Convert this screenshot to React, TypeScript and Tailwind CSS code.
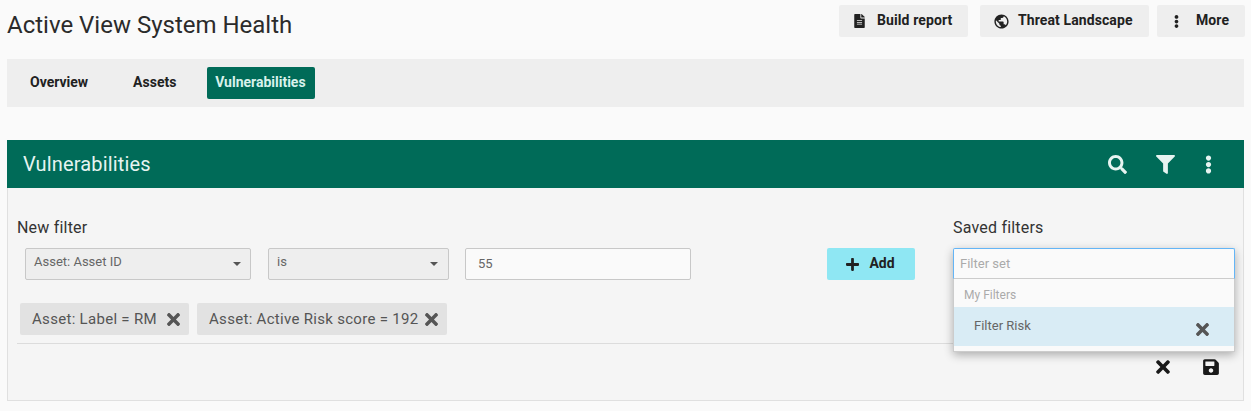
import { FaEllipsisV, FaFileAlt, FaFilter, FaPlus, FaSave, FaSearch, FaTimes } from "react-icons/fa";
import { MdPublic } from "react-icons/md";

const Caret = () => (
  <span className="h-0 w-0 border-x-[4px] border-t-[4px] border-x-transparent border-t-[#555]" />
);

const Chip = ({ label, className }: { label: string; className: string }) => (
  <div className={`flex h-[32px] items-center justify-between rounded-[2px] bg-[#e2e2e2] pl-[12px] pr-[9px] text-[15px] tracking-[0.3px] text-[#555] ${className}`}>
    <span>{label}</span>
    <FaTimes className="h-[19px] w-[13px] text-[#555]" />
  </div>
);

const HeaderButton = ({ icon, label, className }: { icon: React.ReactNode; label: string; className: string }) => (
  <button className={`flex h-[32px] items-center rounded-[2px] bg-[#eeeeee] text-[14px] font-bold tracking-[0.1px] text-[#212121] ${className}`}>
    {icon}
    <span className="mb-[2px]">{label}</span>
  </button>
);

export default function App() {
  return (
    <div className="h-[411px] w-[1251px] overflow-hidden bg-[#fafafa] font-['Roboto',sans-serif] text-[#212121]">
      <div className="flex h-[59px] items-start justify-between pl-[7px] pr-[6px] pt-[5px]">
        <h1 className="mt-[3px] text-[24px] leading-[34px] font-normal text-[#2b2b2b]">Active View System Health</h1>
        <div className="flex">
          <HeaderButton className="w-[129px] pl-[15px] gap-[12px]" icon={<FaFileAlt className="h-[14px] w-[11px]" />} label="Build report" />
          <HeaderButton className="ml-[12px] w-[169px] pl-[13px] gap-[8px]" icon={<MdPublic className="h-[17px] w-[17px]" />} label="Threat Landscape" />
          <HeaderButton className="ml-[8px] w-[88px] pl-[17px] gap-[17px]" icon={<FaEllipsisV className="h-[15px] w-[5px]" />} label="More" />
        </div>
      </div>

      <nav className="mx-[7px] flex h-[48px] items-center bg-[#eeeeee] text-[14px] font-bold">
        <a className="mb-[2px] ml-[23px] text-[#212121]">Overview</a>
        <a className="mb-[2px] ml-[45px] text-[#212121]">Assets</a>
        <a className="ml-[31px] flex h-[32px] w-[108px] items-center justify-center rounded-[2px] bg-[#006b58] pb-[2px] pr-[2px] text-[#d9f2ec]">Vulnerabilities</a>
      </nav>

      <section className="mx-[7px] mt-[33px]">
        <header className="flex h-[48px] items-center justify-between bg-[#006b58] pl-[16px] pr-[32px] text-white">
          <h2 className="text-[20px] tracking-[0.15px] font-normal text-[#e6f4f1]">Vulnerabilities</h2>
          <div className="flex items-center text-[#e6f4f1]">
            <FaSearch className="h-[19px] w-[19px]" />
            <FaFilter className="ml-[29px] h-[19px] w-[19px]" />
            <FaEllipsisV className="ml-[30px] h-[19px] w-[7px]" />
          </div>
        </header>

        <div className="relative h-[213px] border-x border-b border-[#e0e0e0] bg-[#f5f5f5]">
          <div className="flex pl-[9px] pt-[30px]">
            <div className="w-[936px]">
              <div className="text-[16px] leading-[19px] tracking-[0.2px] text-[#333]">New filter</div>
              <div className="mt-[11px] flex items-center pl-[8px]">
                <div className="flex h-[32px] w-[226px] items-start justify-between rounded-[2px] border border-[#c8c8c8] bg-[#eeeeee] pl-[8px] pr-[9px] pt-[3px] text-[13px] text-[#666]">
                  <span>Asset: Asset ID</span>
                  <span className="mt-[10px] flex"><Caret /></span>
                </div>
                <div className="ml-[17px] flex h-[32px] w-[181px] items-start justify-between rounded-[2px] border border-[#c8c8c8] bg-[#eeeeee] pl-[8px] pr-[10px] pt-[3px] text-[13px] text-[#666]">
                  <span>is</span>
                  <span className="mt-[10px] flex"><Caret /></span>
                </div>
                <div className="ml-[16px] flex h-[32px] w-[226px] items-center rounded-[2px] border border-[#c8c8c8] bg-[#fafafa] pl-[12px] text-[13px] text-[#666]">55</div>
                <button className="ml-[136px] flex h-[32px] w-[88px] items-center justify-center gap-[10px] rounded-[2px] bg-[#8fe7f3] pr-[1px] text-[14px] font-bold text-[#212121]">
                  <FaPlus className="h-[15px] w-[13px]" />
                  <span className="mb-[1px]">Add</span>
                </button>
              </div>
            </div>
            <div className="w-[282px]">
              <div className="text-[16px] leading-[19px] tracking-[0.2px] text-[#333]">Saved filters</div>
            </div>
          </div>

          <div className="mt-[23px] flex gap-[8px] pl-[12px]">
            <Chip className="w-[169px]" label="Asset: Label = RM" />
            <Chip className="w-[250px]" label="Asset: Active Risk score = 192" />
          </div>

          <div className="mx-[9px] mt-[8px] border-t border-[#dcdcdc]" />

          <div className="flex items-center justify-end pr-[24px] pt-[13px] text-[#1a1a1a]">
            <FaTimes className="h-[20px] w-[14px]" />
            <FaSave className="ml-[33px] h-[18px] w-[16px]" />
          </div>

          <div className="absolute left-[945px] top-[60px] w-[282px] rounded-[2px] bg-[#fafafa] shadow-[0_3px_10px_rgba(0,0,0,0.3)]">
            <div className="flex h-[31px] items-center rounded-t-[2px] border border-[#64b5f6] border-b-[#cccccc] bg-[#fafafa] pl-[6px] text-[13px] text-[#aaa]">Filter set</div>
            <div className="border-b border-x border-[#cccccc] pb-[5px]">
              <div className="flex h-[28px] items-center pt-[4px] pl-[10px] text-[12px] text-[#aaa]">My Filters</div>
              <div className="flex h-[39px] items-start justify-between bg-[#d9ecf5] pl-[20px] pr-[25px] pt-[9px] text-[13px] text-[#666]">
                <span>Filter Risk</span>
                <FaTimes className="mt-[4px] h-[19px] w-[13px] text-[#555]" />
              </div>
            </div>
          </div>
        </div>
      </section>
    </div>
  );
}
